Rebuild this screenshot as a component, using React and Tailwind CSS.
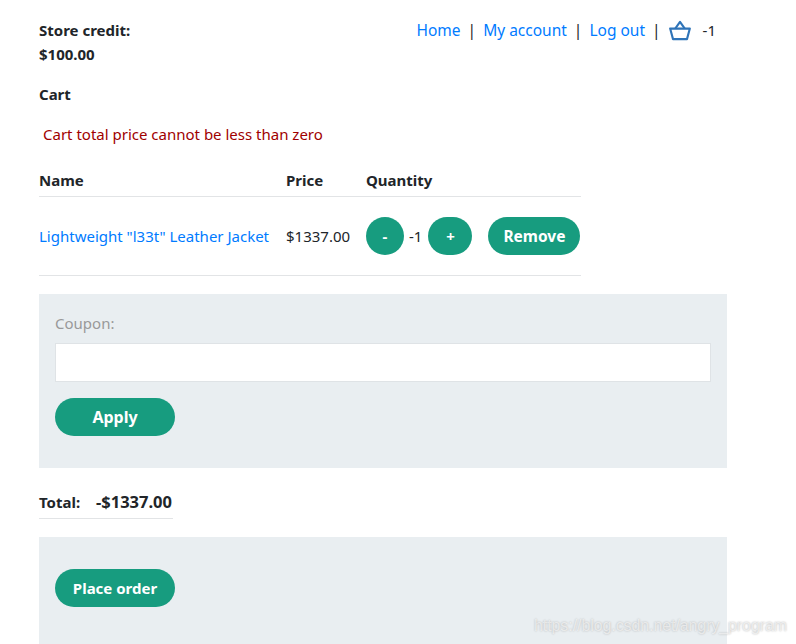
const App = () => {
  return (
    <div className="relative h-[644px] w-[796px] overflow-hidden bg-white font-['Noto_Sans',sans-serif] text-[15px] leading-6 text-[#212529]">
      <div className="pl-[39px] pt-[18px]">
        {/* Header */}
        <div className="flex w-[688px] items-start justify-between">
          <div className="font-bold">
            <p>Store credit:</p>
            <p>$100.00</p>
          </div>
          <nav className="flex items-center pr-[11px] text-[15.5px] text-[#007bff]">
            <a href="#">Home</a>
            <span className="mx-[7px] text-[#212529]">|</span>
            <a href="#">My account</a>
            <span className="mx-[7px] text-[#212529]">|</span>
            <a href="#">Log out</a>
            <span className="ml-[7px] mr-[8px] text-[#212529]">|</span>
            <svg className="h-[21px] w-[22px]" viewBox="0 0 23 21" fill="none" stroke="#2f74b8" strokeWidth="2.2" strokeLinejoin="round">
              <path d="M1.2 8.5h20.6l-3 11H4.2z" />
              <path d="M6.5 8.5l5-7 5 7" />
            </svg>
            <span className="ml-[12px] text-[15px] text-[#212529]">-1</span>
          </nav>
        </div>

        <h2 className="mt-4 font-bold">Cart</h2>
        <p className="ml-[4px] mt-4 text-[#a00000]">Cart total price cannot be less than zero</p>

        {/* Cart table */}
        <table className="mt-[19px] w-[542px] table-fixed border-collapse">
          <thead>
            <tr className="h-[31px] border-b border-[#e2e4e6] text-left font-bold">
              <th className="w-[247px] p-0">Name</th>
              <th className="w-[80px] p-0">Price</th>
              <th className="p-0">Quantity</th>
            </tr>
          </thead>
          <tbody>
            <tr className="h-[79px] border-b border-[#e2e4e6]">
              <td className="p-0 text-[#007bff]">
                <a href="#">Lightweight "l33t" Leather Jacket</a>
              </td>
              <td className="p-0">$1337.00</td>
              <td className="p-0">
                <div className="flex items-center">
                  <button className="h-[38px] w-[38px] rounded-full bg-[#179c7f] font-bold text-white">-</button>
                  <span className="ml-[5px] mr-[6px]">-1</span>
                  <button className="h-[38px] w-[44px] rounded-full bg-[#179c7f] font-bold text-white">+</button>
                  <button className="ml-4 h-[38px] w-[92px] rounded-full bg-[#179c7f] text-[15.5px] font-bold text-white">Remove</button>
                </div>
              </td>
            </tr>
          </tbody>
        </table>

        {/* Coupon */}
        <div className="mt-[18px] h-[174px] w-[688px] bg-[#e9eef1] px-4 pt-[17px]">
          <label className="block text-[#999999]">Coupon:</label>
          <input className="mt-[8px] block h-[39px] w-full border border-[#dfe3e6] bg-white" />
          <button className="mt-[16px] h-[38px] w-[120px] rounded-full bg-[#179c7f] text-[16px] font-bold text-white">Apply</button>
        </div>

        {/* Total */}
        <div className="mt-[22px] flex h-[29px] w-[134px] justify-between border-b border-[#e2e4e6] pr-[1px] font-bold">
          <span>Total:</span>
          <span className="text-[16.5px]">-$1337.00</span>
        </div>

        {/* Place order */}
        <div className="mt-[18px] h-[120px] w-[688px] bg-[#e9eef1] px-4 pt-[32px]">
          <button className="h-[38px] w-[120px] rounded-full bg-[#179c7f] font-bold text-white">Place order</button>
        </div>
      </div>

      {/* Watermark */}
      <span className="absolute left-[534px] top-[614px] font-['Liberation_Sans',sans-serif] text-[15.8px] leading-6 text-white/60 [text-shadow:0_0_2px_#b0b0b0]">
        https://blog.csdn.net/angry_program
      </span>
    </div>
  );
};

export default App;
